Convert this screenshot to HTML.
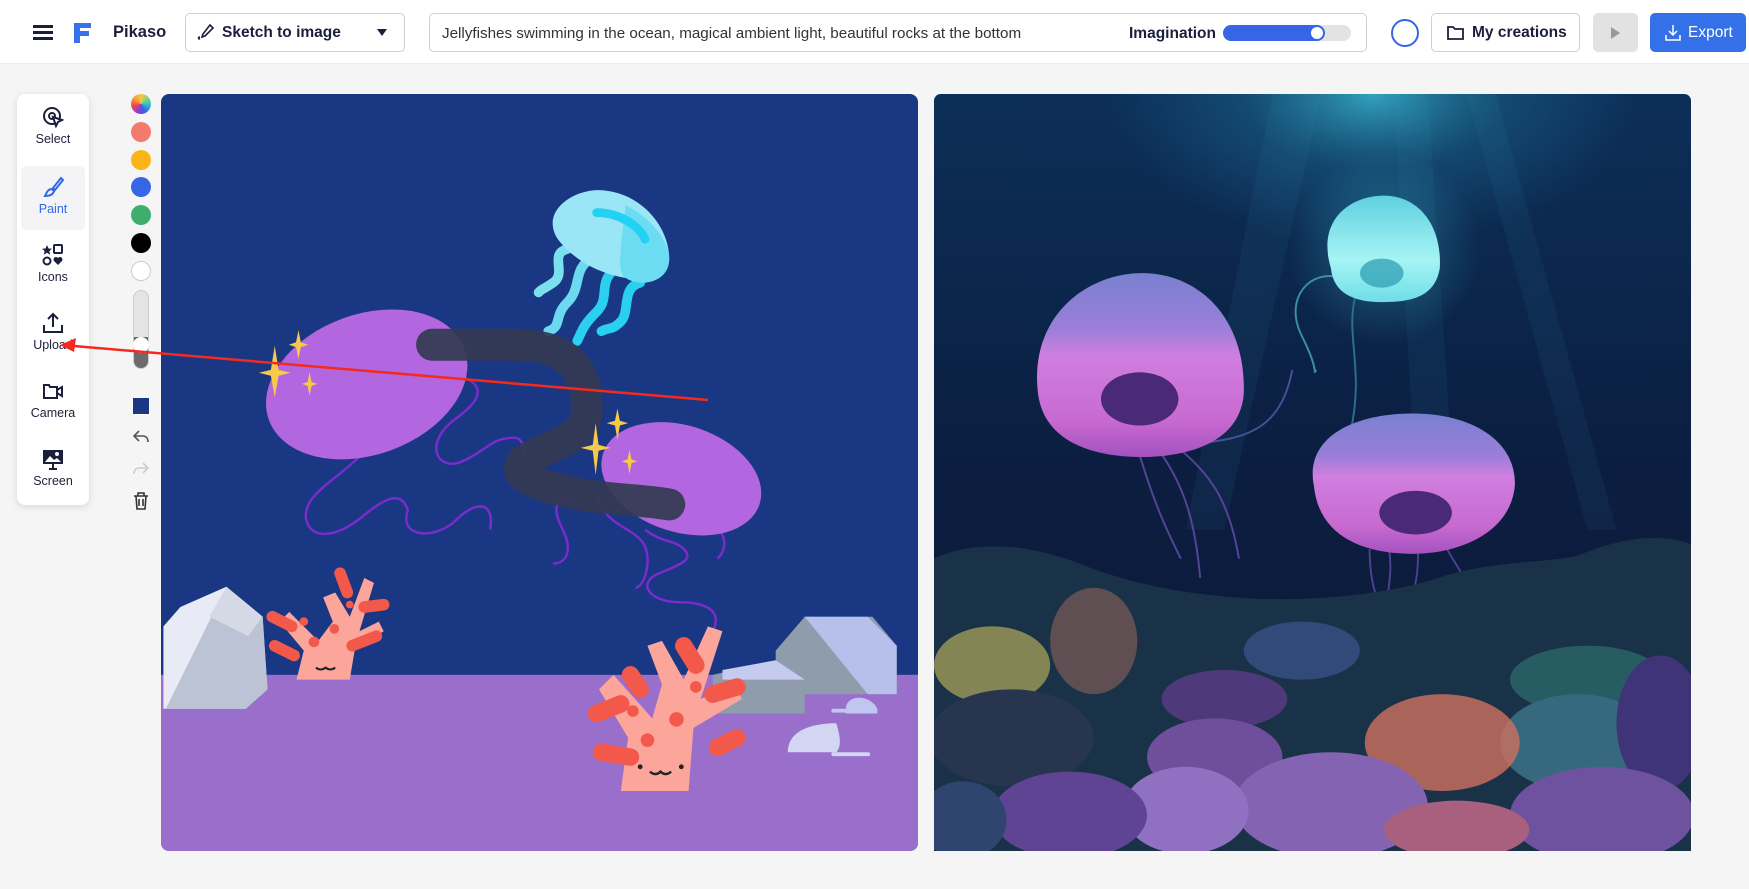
<!DOCTYPE html>
<html><head><meta charset="utf-8"><style>
*{box-sizing:border-box;margin:0;padding:0}
body{width:1749px;height:889px;background:#f5f5f5;font-family:"Liberation Sans",sans-serif;position:relative;overflow:hidden;color:#1c1f3b}
.hdr{position:absolute;left:0;top:0;width:1749px;height:64px;background:#fff;border-bottom:1px solid #eee}
.abs{position:absolute}
.box{position:absolute;border:1px solid #cfcfcf;border-radius:5px;background:#fff}
.tb{position:absolute;left:17px;top:94px;width:72px;height:411px;background:#fff;border-radius:8px;box-shadow:0 2px 8px rgba(0,0,0,.12)}
.tool{position:absolute;left:4px;width:64px;height:64px;text-align:center;font-size:12.5px;color:#1c1f3b}
.tool svg{display:block;margin:10px auto 4px}
.dot{position:absolute;left:131px;width:20px;height:20px;border-radius:50%}
</style></head><body>
<div class="hdr"></div>
<div class="abs" style="left:33px;top:25px;width:20px;height:3px;background:#1c1f3b"></div>
<div class="abs" style="left:33px;top:31px;width:20px;height:3px;background:#1c1f3b"></div>
<div class="abs" style="left:33px;top:37px;width:20px;height:3px;background:#1c1f3b"></div>
<svg class="abs" style="left:73px;top:22px" width="20" height="22" viewBox="0 0 20 22"><path d="M1 1h17v5H7v3h9v5H7v7H1z" fill="#3970ee"/></svg>
<div class="abs" style="left:113px;top:23px;font-size:16.5px;font-weight:bold">Pikaso</div>
<div class="box" style="left:185px;top:13px;width:220px;height:39px"></div>
<svg class="abs" style="left:197px;top:23px" width="18" height="18" viewBox="0 0 18 18" fill="none" stroke="#1c1f3b" stroke-width="1.6"><path d="M13 2l3 3-8 8-3 1 1-3z"/><path d="M3 16c-2 0-2-2 0-2"/></svg>
<div class="abs" style="left:222px;top:24px;font-size:15.5px;font-weight:bold">Sketch to image</div>
<div class="abs" style="left:377px;top:29px;width:0;height:0;border-left:5px solid transparent;border-right:5px solid transparent;border-top:7px solid #1c1f3b"></div>
<div class="box" style="left:429px;top:13px;width:938px;height:39px"></div>
<div class="abs" style="left:442px;top:25px;font-size:15.2px;color:#333">Jellyfishes swimming in the ocean, magical ambient light, beautiful rocks at the bottom</div>
<div class="abs" style="left:1129px;top:25px;font-size:15.5px;font-weight:bold">Imagination</div>
<div class="abs" style="left:1223px;top:25px;width:128px;height:16px;border-radius:8px;background:#e3e3e3"></div>
<div class="abs" style="left:1223px;top:25px;width:100px;height:16px;border-radius:8px;background:#3466e6"></div>
<div class="abs" style="left:1309px;top:25px;width:16px;height:16px;border-radius:50%;background:#fff;border:2px solid #3466e6"></div>
<div class="abs" style="left:1391px;top:19px;width:28px;height:28px;border-radius:50%;border:2px solid #3466e6"></div>
<div class="box" style="left:1431px;top:13px;width:149px;height:39px"></div>
<svg class="abs" style="left:1447px;top:25px" width="17" height="15" viewBox="0 0 17 15" fill="none" stroke="#1c1f3b" stroke-width="1.8"><path d="M1 2h5l2 2h8v10H1z"/></svg>
<div class="abs" style="left:1472px;top:24px;font-size:15.5px;font-weight:bold">My creations</div>
<div class="abs" style="left:1593px;top:13px;width:45px;height:39px;border-radius:5px;background:#e2e2e2"></div>
<div class="abs" style="left:1611px;top:27px;width:0;height:0;border-top:6px solid transparent;border-bottom:6px solid transparent;border-left:9px solid #999"></div>
<div class="abs" style="left:1650px;top:13px;width:96px;height:39px;border-radius:5px;background:#3470e8"></div>
<svg class="abs" style="left:1665px;top:24px" width="16" height="17" viewBox="0 0 16 17" fill="none" stroke="#fff" stroke-width="1.5"><path d="M8 1v10M4 7l4 4 4-4M1 11v5h14v-5"/></svg>
<div class="abs" style="left:1688px;top:24px;font-size:15.5px;color:#fff">Export</div>

<div class="tb">
 <div class="tool" style="top:2px"><svg width="22" height="22" viewBox="0 0 22 22" fill="none" stroke="#1c1f3b" stroke-width="2"><circle cx="10" cy="10" r="8"/><circle cx="10" cy="10" r="3"/><path d="M11 11l3 9 2-4 4-2z" fill="#fff"/></svg>Select</div>
 <div class="tool" style="top:72px;background:#f4f4f6;border-radius:5px;color:#3466e6"><svg width="22" height="22" viewBox="0 0 22 22" fill="none" stroke="#3466e6" stroke-width="2"><path d="M19 2l-8 10 2 2 8-10z"/><path d="M10 13c-4 0-5 3-7 7 4 0 8-1 9-5z"/></svg>Paint</div>
 <div class="tool" style="top:140px"><svg width="22" height="22" viewBox="0 0 22 22"><path d="M5 1l1.5 3.5 3.5.3-2.7 2.3 1 3.6L5 8.8 1.7 10.7l1-3.6L0 4.8l3.5-.3z" fill="#1c1f3b"/><rect x="12" y="1" width="8" height="8" rx="1" fill="none" stroke="#1c1f3b" stroke-width="2"/><circle cx="5" cy="17" r="3.5" fill="none" stroke="#1c1f3b" stroke-width="2"/><path d="M16 21l-4-4a2.3 2.3 0 0 1 4-3 2.3 2.3 0 0 1 4 3z" fill="#1c1f3b"/></svg>Icons</div>
 <div class="tool" style="top:208px"><svg width="22" height="22" viewBox="0 0 22 22" fill="none" stroke="#1c1f3b" stroke-width="2"><path d="M11 15V2M6 7l5-5 5 5M2 13v7h18v-7"/></svg>Upload</div>
 <div class="tool" style="top:276px"><svg width="22" height="22" viewBox="0 0 22 22" fill="none" stroke="#1c1f3b" stroke-width="2"><path d="M2 5h5l1 2h7v11H2z"/><path d="M15 10l5-3v9l-5-3"/></svg>Camera</div>
 <div class="tool" style="top:344px"><svg width="22" height="22" viewBox="0 0 22 22"><rect x="1" y="2" width="20" height="14" fill="#1c1f3b"/><path d="M3 14l5-6 4 4 3-2 4 4z" fill="#fff"/><circle cx="15" cy="6" r="2" fill="#fff"/><path d="M11 16v4M7 21h8" stroke="#1c1f3b" stroke-width="2"/></svg>Screen</div>
</div>
<div class="dot" style="top:94px;background:conic-gradient(#f6c945,#7ed37e,#2ab7d8,#3b5fe0,#9a3bd8,#e84a4a,#f39a3a,#f6c945)"></div>
<div class="dot" style="top:122px;background:#f47a6e"></div>
<div class="dot" style="top:150px;background:#fbb417"></div>
<div class="dot" style="top:177px;background:#3466e6"></div>
<div class="dot" style="top:205px;background:#3fae6d"></div>
<div class="dot" style="top:233px;background:#000"></div>
<div class="dot" style="top:261px;background:#fff;border:1px solid #ccc"></div>
<div class="abs" style="left:133px;top:290px;width:16px;height:79px;border-radius:8px;background:linear-gradient(#e4e4e4 60%,#6b6b6b 60%);border:1px solid #ccc"></div>
<div class="abs" style="left:133px;top:337px;width:16px;height:16px;border-radius:50%;background:#fff"></div>
<div class="abs" style="left:132px;top:397px;width:18px;height:18px;background:#fff;border-radius:50%"></div>
<div class="abs" style="left:133px;top:398px;width:16px;height:16px;background:#1a3784"></div>
<svg class="abs" style="left:132px;top:428px" width="18" height="18" viewBox="0 0 18 18" fill="none" stroke="#555" stroke-width="1.6"><path d="M7 3L2 8l5 5M2 8h9c3 0 5 2 5 6"/></svg>
<svg class="abs" style="left:132px;top:460px" width="18" height="18" viewBox="0 0 18 18" fill="none" stroke="#ccc" stroke-width="1.6"><path d="M11 3l5 5-5 5M16 8H7c-3 0-5 2-5 6"/></svg>
<svg class="abs" style="left:133px;top:492px" width="16" height="18" viewBox="0 0 16 18" fill="none" stroke="#333" stroke-width="1.6"><path d="M1 4h14M5 4V1h6v3M3 4l1 13h8l1-13M6 7v7M10 7v7"/></svg>

<svg class="abs" style="left:161px;top:94px;border-radius:8px" width="757" height="757" viewBox="0 0 1564 1564">
<rect width="1564" height="1564" rx="14" fill="#1a3784"/>
<rect y="1200" width="1564" height="364" fill="#9a6fcb"/>
<g stroke-linecap="round" fill="none" stroke-width="20">
<path d="M840 320c-40 10 0 50-30 70s-20 10-30 20" stroke="#7be0ee"/>
<path d="M890 340c-40 20-20 60-50 90s-10 50-40 60" stroke="#6bdaf0"/>
<path d="M940 360c-40 30-10 60-40 90s-30 40-40 60" stroke="#29d0f0"/>
<path d="M990 390c-40 10-20 60-40 80s-20 10-40 20" stroke="#29d0f0"/>
</g>
<path d="M820 300c-40-60 40-110 100-100 80 10 130 80 130 140 0 50-60 60-90 40-60-10-110-40-140-80z" fill="#9ae6f6"/>
<path d="M960 230c60 30 90 80 90 110 0 50-60 60-90 40-20-10-10-60 0-150z" fill="#6cdcf2"/>
<path d="M900 245c50 0 90 30 100 55" stroke="#23d2f3" stroke-width="18" fill="none" stroke-linecap="round"/>
<g fill="none" stroke="#7a2ccc" stroke-width="5">
<path d="M420 740c-60 60-130 90-120 140 10 40 60 40 120-10s80-40 90-10c-20 60 60 60 100 20s80-40 70 20"/>
<path d="M600 580c60 10 80 40 10 90s-40 110 10 90 60-50 110-50c20 0 30 40 10 40"/>
<path d="M850 830c-40 10-40 30-20 70s10 70-20 70"/>
<path d="M900 830c20 60 60 60 90 90s10 100 -10 100"/>
<path d="M1000 900c40 30 60 20 80 40s0 30 -50 50-20 60 40 60 90 20 70 60"/>
<path d="M1100 880c60 0 80 50 50 80"/>
</g>
<ellipse cx="425" cy="600" rx="215" ry="145" transform="rotate(-20 425 600)" fill="#bb68e4" opacity=".95"/>
<ellipse cx="1075" cy="795" rx="170" ry="110" transform="rotate(18 1075 795)" fill="#bb68e4" opacity=".95"/>
<path d="M560 518h170c120 0 150 60 150 130 0 70-70 70-130 110-30 30 20 50 120 70 60 10 120 10 180 20" stroke="#333a52" stroke-width="66" fill="none" stroke-linecap="round" stroke-linejoin="round" opacity=".92"/>
<g fill="#f7c84a">
<path d="M235 520l8 50 25 6-25 6-8 45-8-45-25-6 25-6z"/>
<path d="M284 488l5 25 15 5-15 5-5 25-5-25-15-5 15-5z"/>
<path d="M307 575l4 20 12 4-12 4-4 20-4-20-12-4 12-4z"/>
<path d="M898 680l6 45 25 6-25 6-6 50-6-50-25-6 25-6z"/>
<path d="M943 650l5 25 17 5-17 5-5 30-5-30-17-5 17-5z"/>
<path d="M968 735l4 20 12 4-12 4-4 22-4-22-12-4 12-4z"/>
</g>
<path d="M40 1060l95-42 75 62 10 150-45 40H5V1100z" fill="#e8ebf5"/>
<path d="M135 1018l75 62 10 150-45 40H10z" fill="#bcc3d4"/>
<path d="M100 1080l35-62 75 62-30 40z" fill="#d5d9e6"/>
<g>
<path d="M280 1210l15-60-50-60 20-20 60 60 30-40-20-50 25-10 30 50 30-80 20 10-30 100 40-20 10 20-60 40-10 60z" fill="#fca59b"/>
<path d="M235 1140l40 20M230 1080l40 20M370 990l15 40M420 1060l40-5M395 1140l50-20" stroke="#f2594a" stroke-width="24" stroke-linecap="round"/>
<circle cx="295" cy="1090" r="9" fill="#f2594a"/><circle cx="358" cy="1105" r="10" fill="#f2594a"/><circle cx="316" cy="1132" r="11" fill="#f2594a"/><circle cx="390" cy="1055" r="8" fill="#f2594a"/>
<path d="M320 1185q10 8 20 0 10 8 20 0" stroke="#222" stroke-width="4" fill="none"/>
</g>
<path d="M1270 1150l60-70h140l50 60v100h-250z" fill="#8e9cab"/>
<path d="M1330 1080h130l60 60v100h-60z" fill="#b7c0ea"/>
<path d="M1140 1200l130-30 60 50v60h-190z" fill="#8e9cab"/>
<path d="M1160 1190l110-20 60 40h-170z" fill="#c5cbee"/>
<path d="M1295 1360c0-50 60-60 100-60 10 30 10 50 0 60z" fill="#d2d6f3"/>
<rect x="1385" y="1360" width="80" height="8" rx="4" fill="#d2d6f3"/>
<path d="M1415 1270c0-30 50-30 65 0v10h-65z" fill="#c0c6ef"/>
<rect x="1385" y="1270" width="80" height="8" rx="4" fill="#c0c6ef"/>
<g>
<path d="M950 1440l15-110-60-100 30-30 80 90 20-70-30-80 30-10 45 80 50-110 30 10-45 140 70-30 15 30-100 60 -10 130z" fill="#fca59b"/>
<path d="M900 1280l50-20M910 1360l60 10M970 1200l20 30M1080 1140l25 40M1140 1240l50-15M1150 1350l40-20" stroke="#f2594a" stroke-width="36" stroke-linecap="round"/>
<circle cx="975" cy="1275" r="12" fill="#f2594a"/><circle cx="1065" cy="1292" r="15" fill="#f2594a"/><circle cx="1005" cy="1335" r="14" fill="#f2594a"/><circle cx="1105" cy="1225" r="12" fill="#f2594a"/>
<path d="M1010 1400q12 10 22 0 10 10 22 0" stroke="#222" stroke-width="5" fill="none"/>
<circle cx="990" cy="1390" r="5" fill="#222"/><circle cx="1075" cy="1390" r="5" fill="#222"/>
</g>
</svg>

<svg class="abs" style="left:934px;top:94px" width="757" height="757" viewBox="0 0 1564 1564">
<defs>
<linearGradient id="bg" x1="0" y1="0" x2="0" y2="1"><stop offset="0" stop-color="#0c2f58"/><stop offset=".45" stop-color="#0b1f42"/><stop offset="1" stop-color="#0e1634"/></linearGradient>
<radialGradient id="lt" cx=".58" cy="0" r=".35"><stop offset="0" stop-color="#3ab8d0" stop-opacity=".85"/><stop offset=".5" stop-color="#1e6f96" stop-opacity=".4"/><stop offset="1" stop-color="#1e6f96" stop-opacity="0"/></radialGradient>
<linearGradient id="jp" x1="0" y1="0" x2="0" y2="1"><stop offset="0" stop-color="#7a80d0"/><stop offset=".3" stop-color="#9a7ed8"/><stop offset=".45" stop-color="#d07ee0"/><stop offset=".8" stop-color="#c86ad0"/><stop offset="1" stop-color="#a452c0"/></linearGradient>
<linearGradient id="jc" x1="0" y1="0" x2="0" y2="1"><stop offset="0" stop-color="#5fd0e0"/><stop offset=".6" stop-color="#a6f4f4"/><stop offset="1" stop-color="#6fdde8"/></linearGradient>
<radialGradient id="gl" cx=".5" cy=".5" r=".5"><stop offset="0" stop-color="#40d0e8" stop-opacity=".35"/><stop offset="1" stop-color="#40d0e8" stop-opacity="0"/></radialGradient>
</defs>
<rect width="1564" height="1564" rx="14" fill="url(#bg)"/>
<rect width="1564" height="900" fill="url(#lt)"/>
<g fill="#3a9ac0" opacity=".08"><path d="M700 0l-180 900h80L800 0z"/><path d="M950 0l50 900h80L1020 0z"/><path d="M1100 0l250 900h60L1160 0z"/></g>
<circle cx="930" cy="320" r="200" fill="url(#gl)"/>
<g fill="none" stroke-width="4">
<path d="M840 380c-60-20-120 40-80 120s20 80 30 70" stroke="#3a8fa8"/>
<path d="M870 420c-20 80 20 150-10 280" stroke="#2b6f8c"/>
<path d="M560 720c100-10 160-40 180-150" stroke="#4a4f98"/>
<path d="M420 730c30 100 50 150 90 230M460 730c60 80 80 160 90 270M490 720c80 60 120 120 140 240" stroke="#54459a"/>
<path d="M900 940c0 80 20 120 40 150M940 940c10 60 -10 100 0 130M1060 940c20 40 60 80 30 100M1000 950c0 80 -20 100 -30 130" stroke="#4c4090"/>
</g>
<path d="M820 360c-30-100 40-150 110-150s120 60 115 150c-10 60-60 70-120 70-60 0-100-20-105-70z" fill="url(#jc)"/>
<ellipse cx="925" cy="370" rx="45" ry="30" fill="#2a9ab0" opacity=".7"/>
<path d="M215 620c-20-160 100-250 215-250s215 90 210 250c-10 120-160 130-210 130-80 0-200-20-215-130z" fill="url(#jp)"/>
<ellipse cx="425" cy="630" rx="80" ry="55" fill="#4a2a78"/>
<path d="M785 810c-20-100 80-150 205-150s215 60 210 150c-10 100-120 140-210 140-110 0-195-40-205-140z" fill="url(#jp)"/>
<ellipse cx="995" cy="865" rx="75" ry="45" fill="#4a2a78"/>
<path d="M0 960c80-40 200-30 300 10s200 60 320 70 300 0 420-40 250-30 300-50 140-50 224-20V1564H0z" fill="#1a3248"/>
<ellipse cx="120" cy="1180" rx="120" ry="80" fill="#a7a25a" opacity=".75"/>
<ellipse cx="330" cy="1130" rx="90" ry="110" fill="#a46a5c" opacity=".5"/>
<ellipse cx="1350" cy="1210" rx="160" ry="70" fill="#2d6e6e" opacity=".7"/>
<ellipse cx="760" cy="1150" rx="120" ry="60" fill="#324a7a"/>
<ellipse cx="600" cy="1250" rx="130" ry="60" fill="#4e3a7a"/>
<ellipse cx="160" cy="1330" rx="170" ry="100" fill="#28354f"/>
<ellipse cx="1330" cy="1340" rx="160" ry="100" fill="#36697e"/>
<ellipse cx="1500" cy="1300" rx="90" ry="140" fill="#3f3478"/>
<ellipse cx="1050" cy="1340" rx="160" ry="100" fill="#d0705e" opacity=".8"/>
<ellipse cx="580" cy="1370" rx="140" ry="80" fill="#6f4e9c"/>
<ellipse cx="820" cy="1470" rx="200" ry="110" fill="#8463b2"/>
<ellipse cx="520" cy="1480" rx="130" ry="90" fill="#9070c0"/>
<ellipse cx="280" cy="1490" rx="160" ry="90" fill="#5e4492"/>
<ellipse cx="1380" cy="1490" rx="190" ry="100" fill="#6e52a0"/>
<ellipse cx="1080" cy="1520" rx="150" ry="60" fill="#a8607e"/>
<ellipse cx="60" cy="1500" rx="90" ry="80" fill="#304470"/>
</svg>

<svg class="abs" style="left:0;top:0;pointer-events:none" width="1749" height="889"><path d="M62 345L708 400" stroke="#f42a1f" stroke-width="2.5"/><path d="M60 345l16-7-2 14z" fill="#f42a1f"/></svg>
</body></html>
